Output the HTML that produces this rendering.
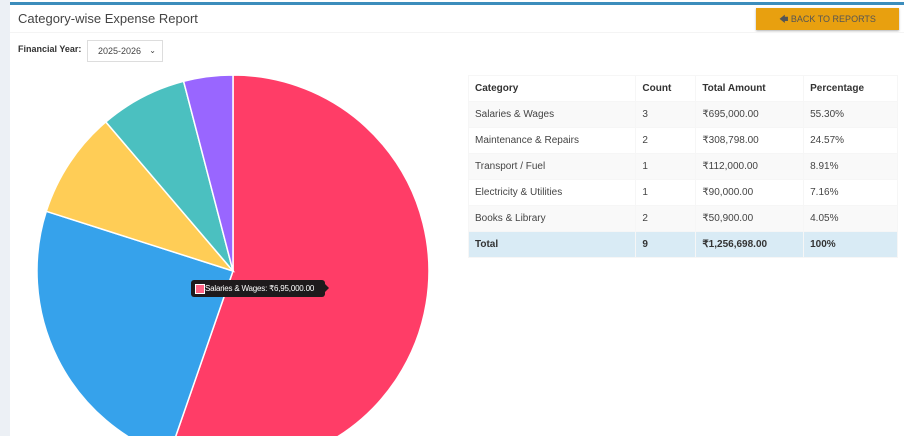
<!DOCTYPE html>
<html><head><meta charset="utf-8"><style>
*{box-sizing:border-box;margin:0;padding:0}
html,body{width:904px;height:436px;overflow:hidden}
body{background:#fff;font-family:"Liberation Sans",sans-serif;color:#333;position:relative}
.strip{position:absolute;left:0;top:0;width:10px;height:436px;background:#ecf0f5}
.topb{position:absolute;left:10px;top:2px;right:0;height:3px;background:#3c8dbc}
.title{position:absolute;left:18px;top:11px;font-size:13px;color:#444}
.hr{position:absolute;left:10px;right:0;top:32px;border-top:1px solid #f4f4f4}
.btn{position:absolute;left:756px;top:8px;width:143px;height:22px;background:#e8a00f;color:#555;font-size:9px;text-align:center;line-height:22px;box-shadow:0 1px 2px rgba(0,0,0,.3)}
.fy{position:absolute;left:18px;top:44px;font-size:9px;font-weight:bold;color:#333}
.sel{position:absolute;left:87px;top:40px;width:76px;height:22px;border:1px solid #ddd;font-size:9px;line-height:20px;padding-left:10px;color:#444}
.sel span{position:absolute;right:6px;top:0;font-size:8px}
table{position:absolute;left:468px;top:75px;width:430px;border-collapse:collapse;font-size:10px}
td{height:26px;padding:0 6px;border:1px solid #f6f6f6;color:#444}
tr.h td{font-weight:bold;color:#333}
tr.s td{background:#f9f9f9}
tr.t td{background:#d9ebf5;font-weight:bold;color:#333}
.tip{position:absolute;left:191px;top:280px;width:134px;height:17px;background:#1e1a1c;border-radius:3px;color:#fff;font-size:8px;letter-spacing:-0.2px;line-height:17px;padding-left:14px;white-space:nowrap}
.tip:before{content:"";position:absolute;left:4px;top:4px;width:8px;height:8px;background:#ff6384;border:1px solid #fff}
.tip:after{content:"";position:absolute;right:-4px;top:4px;border:4px solid transparent;border-left-color:#1e1a1c;border-right:0}
svg{position:absolute;left:0;top:0}
</style></head><body>
<div class="strip"></div><div class="topb"></div>
<div class="title">Category-wise Expense Report</div>
<div class="btn">&#129092; BACK TO REPORTS</div>
<div class="hr"></div>
<div class="fy">Financial Year:</div>
<div class="sel">2025-2026<span>&#8964;</span></div>
<svg width="904" height="436">
<g stroke="#fff" stroke-width="1.5">
<path d="M233 271 L233 75 A196 196 0 1 1 168.8 456.2 Z" fill="#ff3d67"/>
<path d="M233 271 L168.8 456.2 A196 196 0 0 1 46.3 211.3 Z" fill="#36a2eb"/>
<path d="M233 271 L46.3 211.3 A196 196 0 0 1 105.8 121.9 Z" fill="#ffcd56"/>
<path d="M233 271 L105.8 121.9 A196 196 0 0 1 183.6 81.3 Z" fill="#4bc0c0"/>
<path d="M233 271 L183.6 81.3 A196 196 0 0 1 233 75 Z" fill="#9966ff"/>
</g></svg>
<div class="tip">Salaries &amp; Wages: ₹6,95,000.00</div>
<table>
<colgroup><col style="width:168px"><col style="width:60px"><col style="width:108px"><col style="width:94px"></colgroup>
<tr class="h"><td>Category</td><td>Count</td><td>Total Amount</td><td>Percentage</td></tr>
<tr class="s"><td>Salaries &amp; Wages</td><td>3</td><td>₹695,000.00</td><td>55.30%</td></tr>
<tr><td>Maintenance &amp; Repairs</td><td>2</td><td>₹308,798.00</td><td>24.57%</td></tr>
<tr class="s"><td>Transport / Fuel</td><td>1</td><td>₹112,000.00</td><td>8.91%</td></tr>
<tr><td>Electricity &amp; Utilities</td><td>1</td><td>₹90,000.00</td><td>7.16%</td></tr>
<tr class="s"><td>Books &amp; Library</td><td>2</td><td>₹50,900.00</td><td>4.05%</td></tr>
<tr class="t"><td>Total</td><td>9</td><td>₹1,256,698.00</td><td>100%</td></tr>
</table>
</body></html>
